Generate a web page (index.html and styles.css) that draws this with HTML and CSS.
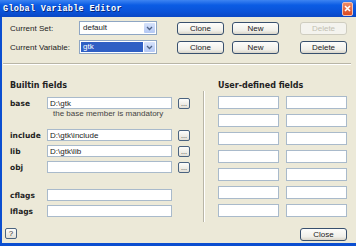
FILE: index.html
```html
<!DOCTYPE html>
<html lang="en">
<head>
    <meta charset="UTF-8">
    <title>Global Variable Editor</title>
    <link rel="stylesheet" href="styles.css">
</head>
<body>
    <div class="window">
        <div class="titlebar">
            <span class="title">Global Variable Editor</span>
            <span class="close-x">
                <svg width="7" height="7" viewBox="0 0 7 7"><path d="M1 1L6 6M6 1L1 6" stroke="#fff" stroke-width="1.6"/></svg>
            </span>
        </div>
        <div class="client">
            <!-- set / variable selectors -->
            <div class="top">
                <div class="row">
                    <span class="lbl">Current Set:</span>
                    <div class="combo">
                        <span class="combo-text">default</span>
                        <span class="combo-btn"><svg width="7" height="5" viewBox="0 0 7 5"><path d="M1 1L3.5 3.5L6 1" fill="none" stroke="#4d6185" stroke-width="1.3"/></svg></span>
                    </div>
                    <button class="btn clone">Clone</button>
                    <button class="btn new">New</button>
                    <button class="btn delete" disabled>Delete</button>
                </div>
                <div class="row">
                    <span class="lbl">Current Variable:</span>
                    <div class="combo">
                        <span class="combo-text sel">gtk</span>
                        <span class="combo-btn"><svg width="7" height="5" viewBox="0 0 7 5"><path d="M1 1L3.5 3.5L6 1" fill="none" stroke="#4d6185" stroke-width="1.3"/></svg></span>
                    </div>
                    <button class="btn clone">Clone</button>
                    <button class="btn new">New</button>
                    <button class="btn delete">Delete</button>
                </div>
            </div>

            <div class="hsep"></div>

            <div class="panels">
                <div class="builtin">
                    <div class="heading">Builtin fields</div>
                    <div class="field first">
                        <span class="flabel">base</span>
                        <input class="text" type="text" value="D:\gtk">
                        <button class="dots">...</button>
                    </div>
                    <div class="hint">the base member is mandatory</div>
                    <div class="field gap-l">
                        <span class="flabel">include</span>
                        <input class="text" type="text" value="D:\gtk\include">
                        <button class="dots">...</button>
                    </div>
                    <div class="field">
                        <span class="flabel">lib</span>
                        <input class="text" type="text" value="D:\gtk\lib">
                        <button class="dots">...</button>
                    </div>
                    <div class="field">
                        <span class="flabel">obj</span>
                        <input class="text" type="text" value="">
                        <button class="dots">...</button>
                    </div>
                    <div class="field gap-xl">
                        <span class="flabel">cflags</span>
                        <input class="text" type="text" value="">
                    </div>
                    <div class="field">
                        <span class="flabel">lflags</span>
                        <input class="text" type="text" value="">
                    </div>
                </div>

                <div class="vsep"></div>

                <div class="userdef">
                    <div class="heading">User-defined fields</div>
                    <div class="user-grid">
                        <input class="text" type="text"><input class="text" type="text">
                        <input class="text" type="text"><input class="text" type="text">
                        <input class="text" type="text"><input class="text" type="text">
                        <input class="text" type="text"><input class="text" type="text">
                        <input class="text" type="text"><input class="text" type="text">
                        <input class="text" type="text"><input class="text" type="text">
                        <input class="text" type="text"><input class="text" type="text">
                    </div>
                </div>
            </div>

            <div class="footer">
                <button class="help">?</button>
                <button class="btn close">Close</button>
            </div>
        </div>
    </div>
</body>
</html>
```

FILE: styles.css
```css
html, body {
    margin: 0;
    background: #fff;
}
body {
    font-family: "Liberation Sans", Arial, sans-serif;
    font-size: 8px;
    color: #222;
}
.window {
    width: 356px;
    height: 246px;
    display: flex;
    flex-direction: column;
    box-shadow: 0 3px 2px -1px rgba(0, 0, 0, 0.35);
}
.titlebar {
    height: 17px;
    flex: none;
    display: flex;
    align-items: center;
    justify-content: space-between;
    padding: 0 3px 0 3px;
    background: linear-gradient(to bottom, #3d84f2 0%, #0b5ce4 30%, #0a52d8 70%, #0a47c4 100%);
}
.title {
    font-family: "Liberation Mono", monospace;
    font-weight: bold;
    font-size: 8.5px;
    letter-spacing: 0.3px;
    color: #fff;
    text-shadow: 1px 1px 0 #0a2a7a;
}
.close-x {
    width: 11px;
    height: 14px;
    box-sizing: border-box;
    border: 1px solid #f3c2b4;
    border-radius: 2px;
    background: linear-gradient(to bottom, #ee8a66, #dc4a22);
    display: flex;
    align-items: center;
    justify-content: center;
}
.client {
    flex: 1;
    background: #ece9d8;
    border-left: 2px solid #0b4ed0;
    border-bottom: 3px solid #0b4ed0;
    display: flex;
    flex-direction: column;
}

/* top selectors */
.top {
    padding: 4px 0 0 8px;
    display: flex;
    flex-direction: column;
    gap: 5px;
}
.row {
    display: flex;
    align-items: center;
    height: 14px;
}
.lbl {
    width: 69px;
}
.combo {
    width: 78px;
    height: 14px;
    box-sizing: border-box;
    border: 1px solid #8ea6c4;
    background: #fff;
    display: flex;
    padding: 1px;
}
.combo-text {
    flex: 1;
    line-height: 10px;
    padding-left: 2px;
}
.combo-text.sel {
    background: #2f5fc4;
    color: #fff;
    margin-right: 1px;
}
.combo-btn {
    width: 11px;
    background: linear-gradient(to bottom, #d6e2fb, #b4c8f4);
    border-radius: 1px;
    display: flex;
    align-items: center;
    justify-content: center;
}
.btn {
    width: 47px;
    height: 13px;
    padding: 0;
    font-family: "Liberation Sans", Arial, sans-serif;
    font-size: 8px;
    color: #222;
    border: 1px solid #38506e;
    border-radius: 3px;
    background: linear-gradient(to bottom, #fdfdfb, #f0efe9 70%, #d9d5c9);
}
.btn.clone {
    margin-left: 20px;
}
.btn.new {
    margin-left: 8px;
}
.btn.delete {
    margin-left: 21px;
}
.btn:disabled {
    color: #c2bfb2;
    border-color: #cfcdc0;
    background: #f4f3ee;
}
.hsep {
    margin: 9px 5px 0 1px;
    border-top: 1px solid #b8b5a6;
    border-bottom: 1px solid #fff;
}

/* field panels */
.panels {
    display: flex;
}
.builtin {
    width: 193px;
    padding: 16px 0 0 8px;
}
.heading {
    font-family: "DejaVu Sans", sans-serif;
    font-weight: bold;
    font-size: 8px;
    line-height: 10px;
    height: 10px;
    color: #222;
}
.field {
    display: flex;
    align-items: center;
    height: 12px;
    margin-top: 4px;
}
.field.first {
    margin-top: 6px;
}
.field.gap-l {
    margin-top: 10px;
}
.field.gap-xl {
    margin-top: 16px;
}
.flabel {
    width: 37px;
    font-family: "DejaVu Sans", sans-serif;
    font-weight: bold;
    font-size: 7.5px;
}
.text {
    box-sizing: border-box;
    height: 12px;
    margin: 0;
    padding: 0 2px;
    border: 1px solid #a9bacb;
    background: #fff;
    font-family: "Liberation Sans", Arial, sans-serif;
    font-size: 8px;
    color: #222;
    outline: none;
}
.field .text {
    width: 125px;
}
.dots, .help {
    width: 12px;
    height: 11px;
    padding: 0;
    margin-left: 6px;
    font-family: "Liberation Sans", Arial, sans-serif;
    font-size: 7px;
    line-height: 7px;
    color: #333;
    border: 1px solid #4a6380;
    border-radius: 2px;
    background: linear-gradient(to bottom, #fdfdfb, #e3e0d6);
}
.hint {
    height: 10px;
    line-height: 10px;
    margin-left: 43px;
    color: #444;
}
.vsep {
    margin-top: 26px;
    height: 131px;
    border-left: 1px solid #b8b5a6;
    border-right: 1px solid #fff;
}
.userdef {
    margin-left: 13px;
    padding-top: 16px;
}
.user-grid {
    margin-top: 5px;
    display: grid;
    grid-template-columns: 61px 61px;
    grid-auto-rows: 13px;
    column-gap: 7px;
    row-gap: 5px;
}
.user-grid .text {
    width: 61px;
    height: 13px;
}

/* bottom buttons */
.footer {
    margin-top: auto;
    display: flex;
    justify-content: space-between;
    align-items: flex-start;
    padding: 0 9px 2px 3px;
}
.help {
    margin-left: 0;
    font-size: 8px;
}
```
